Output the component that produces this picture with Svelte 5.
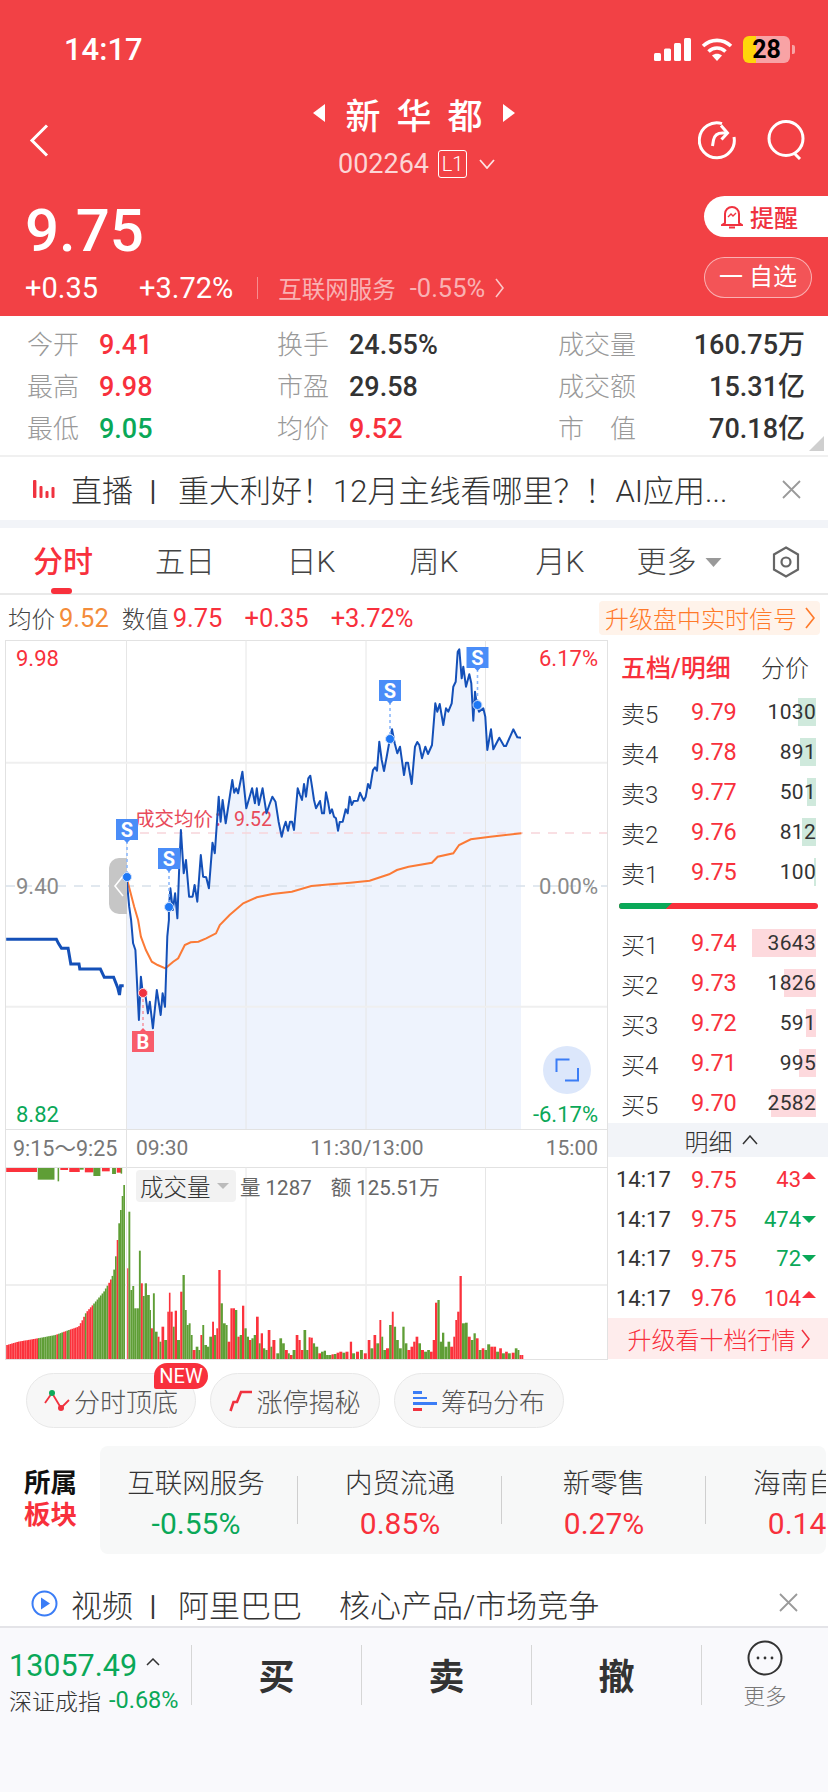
<script>
  // chart points were read from crops of the chart, so they come in crop units
  const a = ([x, y]) => [x / 2.57, y / 3];
  const b = ([x, y]) => [x / 2.57, 280 + y / 3];
  const c = ([x, y]) => [280 + x / 3, y / 3];
  const toPath = (pts) => pts.map(([x, y], i) => `${i ? 'L' : 'M'}${x.toFixed(1)} ${y.toFixed(1)}`).join('');

  const priceLine = [
    ...[[325,712],[332,800]].map(a),
    ...[[337,0],[342,70],[348,90],[357,300],[362,170],[367,220],[372,210],[380,280],[385,245],[393,325],[403,210],[413,285],[418,220],[424,260],[430,50],[434,0]].map(b),
    ...[[434,800],[438,745],[444,810],[450,760],[456,835],[460,700],[465,570],[472,700],[478,660],[486,770],[495,770],[500,735],[507,785],[516,645],[522,710],[530,712],[537,745],[546,608],[552,640],[562,470],[567,545],[572,480],[580,550],[597,420],[602,458],[607,445],[612,460],[623,395],[633,505],[648,445],[655,490],[660,445],[665,495],[675,445],[685,520],[692,495],[700,470],[708,485],[716,545]].map(a),
    ...[[5,590],[12,560],[17,545],[24,572],[30,545],[36,545],[42,570],[53,445],[60,465],[66,480],[72,432],[78,470],[85,415],[91,407],[97,445],[102,480],[108,505],[120,483],[126,520],[132,520],[138,457],[145,490],[150,520],[156,508],[162,530],[168,535],[174,572],[179,546],[188,545],[197,508],[203,520],[209,470],[215,495],[221,483],[233,482],[240,458],[251,482],[257,470],[264,432],[270,445],[279,390],[285,382],[291,392],[298,305],[305,360],[312,393],[320,350],[330,295],[336,268],[344,310],[352,340],[360,320],[372,405],[378,368],[384,368],[395,432],[405,320],[412,306],[418,315],[426,355],[436,320],[444,342],[456,315],[466,190],[472,215],[479,192],[490,255],[498,205],[505,215],[515,190],[520,140],[527,125],[533,35],[538,28],[545,115],[550,80],[558,140],[568,103],[574,130],[580,242],[585,155],[590,190],[597,215],[610,205],[616,230],[622,330],[633,268],[640,328],[658,293],[672,318],[678,318],[700,268],[712,292],[723,293]].map(c)
  ];
  const premarket = [[16,58],[145,58],[150,70],[158,85],[175,85],[182,132],[203,132],[205,147],[258,147],[268,172],[292,172],[303,205],[307,225],[310,197],[318,197]].map(b);
  const avgLine = [
    ...[[325,712],[345,800],[355,840]].map(a),
    ...[[362,50],[375,90],[390,125],[405,135],[425,145],[445,125],[458,115],[475,75],[490,67],[510,65],[530,55],[555,40],[565,15]].map(b),
    ...[[590,825],[605,810],[625,790],[660,772],[700,762],[750,755],[800,738],[850,733],[900,728],[950,722],[1000,703],[1020,690],[1050,680],[1110,668],[1125,650],[1165,640],[1180,615],[1210,598],[1260,590],[1340,580]].map(a)
  ];
  const last = priceLine[priceLine.length - 1];
  const areaPath = `${toPath(priceLine)}L${last[0].toFixed(1)} 489L126.5 489Z`;

  const vx = [126.5, 246, 366, 485.5];
  const badges = [
    { x: 127, top: 179, dot: 237, t: 'S' },
    { x: 169, top: 208, dot: 267, t: 'S' },
    { x: 390, top: 40, dot: 99, t: 'S' },
    { x: 477.5, top: 7, dot: 65, t: 'S' }
  ];

  // pre-market volume envelope, then one entry per session bar
  const env = [[16,555],[45,545],[95,535],[140,525],[175,510],[200,500],[210,480],[218,460],[225,450],[240,430],[265,395],[280,365],[290,340],[297,275],[303,200],[310,135],[316,75]];
  const reds = [[16,95],[143,148],[160,167],[178,216],[222,238],[278,284],[297,302]];
  const topAt = (x) => {
    for (let i = 1; i < env.length; i++) {
      if (x <= env[i][0]) {
        const [x0, y0] = env[i - 1], [x1, y1] = env[i];
        return y0 + (y1 - y0) * (x - x0) / (x1 - x0);
      }
    }
    return 75;
  };
  const preBars = [];
  for (let x = 16; x < 318; x += 4.3) {
    preBars.push({ x: x / 2.57, w: 1.7, top: topAt(x) / 3 - 7, red: reds.some(([l, r]) => x >= l && x <= r) });
  }
  const session = 'r327,325 g330,155 g335,390 g340,378 g345,445 g351,445 g357,272 r362,370 g367,408 g372,370 g378,405 g385,450 r388,505 g393,400 g398,515 r405,530 g410,545 r415,500 g422,540 r430,455 r434,398 r438,455 g444,500 r449,452 g455,540 r463,395 g469,345 g475,450 g480,495 g485,490 g490,525 r495,570 g503,560 g510,570 r515,525 g520,495 g525,555 g532,560 g538,530 r545,485 g550,525 r556,505 r561,330 g567,430 g573,490 g580,495 r585,545 r592,445 r598,445 g604,450 r610,530 g616,525 r622,437 g628,505 g634,530 r640,540 g646,535 g652,525 r658,470 g665,550 r670,520 g676,565 g682,570 r688,510 g695,560 r700,540 g710,580 g718,535 g725,550 r732,570 g740,580 r745,585 g752,570 r760,525 r767,540 r773,570 g780,510 g787,570 r793,532 r798,533 g804,550 g810,560 r818,580 g825,575 g832,572 g838,585 g845,585 r852,583 g858,582 r865,578 r872,575 g880,578 r888,575 r899,545 g905,580 r915,575 g925,570 r935,580 r945,540 g952,565 r960,525 g967,550 r975,480 g980,530 g985,570 r992,565 g1000,495 r1007,455 g1012,500 g1018,540 g1025,565 g1034,500 g1040,550 r1047,570 r1055,560 r1062,545 r1068,530 g1075,550 r1082,570 g1090,575 g1098,570 r1105,575 r1112,540 r1118,428 g1124,420 g1130,545 g1136,518 g1142,560 g1150,545 r1157,560 r1165,530 r1170,480 r1175,455 r1181,348 g1187,490 g1195,488 r1202,530 g1210,540 g1217,520 r1223,535 g1230,570 r1238,565 g1245,570 g1252,553 r1260,560 r1268,560 g1275,575 r1283,565 g1290,580 r1298,575 g1305,580 r1315,578 g1323,565 g1330,570 r1335,585 r1340,585'.split(' ').map((s) => {
    const [x, top] = s.slice(1).split(',').map(Number);
    return { x, top, red: s[0] === 'r' };
  });
  const sessionBars = session.map((s, i) => {
    const next = session[i + 1] ? session[i + 1].x : s.x + 5;
    return { x: s.x / 2.57, w: Math.min((next - s.x) / 2.57, 3), top: s.top / 3 - 7, red: s.red };
  });
  const volBars = [...preBars, ...sessionBars];

  const stripes = [[16,95,12,'r'],[97,140,35,'g'],[148,152,40,'g'],[155,175,6,'r'],[178,205,12,'r'],[205,215,5,'g'],[218,240,13,'r'],[240,258,24,'g'],[262,282,10,'r'],[288,298,18,'g'],[300,312,14,'r'],[310,314,17,'g']];

  const stats = [
    [{ l: '今开', v: '9.41', c: 'up' }, { l: '换手', v: '24.55%' }, { l: '成交量', v: '160.75万' }],
    [{ l: '最高', v: '9.98', c: 'up' }, { l: '市盈', v: '29.58' }, { l: '成交额', v: '15.31亿' }],
    [{ l: '最低', v: '9.05', c: 'down' }, { l: '均价', v: '9.52', c: 'up' }, { l: '市　值', v: '70.18亿' }]
  ];
  const tabs = [
    { t: '分时', x: 63 }, { t: '五日', x: 185 }, { t: '日K', x: 311 }, { t: '周K', x: 434 }, { t: '月K', x: 560 }
  ];
  const asks = [
    ['卖5', '9.79', '1030', 18], ['卖4', '9.78', '891', 16], ['卖3', '9.77', '501', 9], ['卖2', '9.76', '812', 14], ['卖1', '9.75', '100', 2]
  ];
  const bids = [
    ['买1', '9.74', '3643', 64], ['买2', '9.73', '1826', 32], ['买3', '9.72', '591', 10], ['买4', '9.71', '995', 17], ['买5', '9.70', '2582', 45]
  ];
  const ticks = [
    ['9.75', '43', true], ['9.75', '474', false], ['9.75', '72', false], ['9.76', '104', true]
  ];
  const sectors = [
    ['互联网服务', '-0.55%', 'down'], ['内贸流通', '0.85%', 'up'], ['新零售', '0.27%', 'up'], ['海南自贸', '0.14%', 'up']
  ];
</script>

<div class="page">
  <header class="top">
    <div class="status">
      <span class="clock">14:17</span>
      <div class="status-icons">
        <svg width="37" height="23" viewBox="0 0 37 23" fill="#fff">
          <rect x="0" y="15" width="7" height="8" rx="1.5" /><rect x="10" y="10.5" width="7" height="12.5" rx="1.5" /><rect x="20" y="5" width="7" height="18" rx="1.5" /><rect x="30" y="0" width="7" height="23" rx="1.5" />
        </svg>
        <svg class="wifi" width="32" height="24" viewBox="0 0 32 24" fill="none" stroke="#fff" stroke-width="3.6">
          <path d="M2 9C10 1.5 22 1.5 30 9" /><path d="M7.5 14.5C12.5 9.8 19.5 9.8 24.5 14.5" /><path d="M16 24l-5-5.4c3-2.4 7-2.4 10 0z" fill="#fff" stroke="none" />
        </svg>
        <div class="battery"><span>28</span></div>
        <i class="battery-tip"></i>
      </div>
    </div>

    <div class="nav">
      <svg class="back" width="20" height="33" viewBox="0 0 20 33" fill="none" stroke="#fff" stroke-width="3"><path d="M18 1.5L3 16.5l15 15" /></svg>
      <div class="title">
        <div class="name"><i class="tri left"></i><span>新华都</span><i class="tri right"></i></div>
        <div class="code">
          <span>002264</span><b>L1</b>
          <svg width="16" height="10" viewBox="0 0 16 10" fill="none" stroke="#fff" stroke-opacity=".85" stroke-width="1.8"><path d="M1 1l7 8 7-8" /></svg>
        </div>
      </div>
      <div class="nav-icons">
        <svg width="38" height="40" viewBox="0 0 38 40" fill="none" stroke="#fff" stroke-width="3"><path d="M24 3.600A17.500 17.500 0 1 0 36 17" /><path d="M14.500 26l1-6c.8-4 4-7 9-7h4" /><path d="M23 5.500l6.500 7.500-6 6.500" /></svg>
        <svg width="38" height="40" viewBox="0 0 38 40" fill="none" stroke="#fff" stroke-width="3"><circle cx="19" cy="18.500" r="17" /><path d="M27 33l6 6" /></svg>
      </div>
    </div>

    <div class="quote">
      <div>
        <div class="last">9.75</div>
        <div class="change">
          <span class="chg">+0.35</span>
          <span class="pct">+3.72%</span>
          <i class="bar"></i>
          <span class="sector">互联网服务</span>
          <span class="sector-pct">-0.55%</span>
          <svg width="10" height="20" viewBox="0 0 10 20" fill="none" stroke="#fff" stroke-opacity=".7" stroke-width="1.6"><path d="M1 1l7 9-7 9" /></svg>
        </div>
      </div>
      <div class="pills">
        <div class="remind">
          <svg width="22" height="26" viewBox="0 0 22 26" fill="none" stroke="#f0323f" stroke-width="2"><path d="M4 19V10a7 7 0 0 1 14 0v9l3 2H1z" /><path d="M8 23.500h6" /><path d="M7 13l3-3 2 2 3-3" stroke-width="1.400" /></svg>
          <span>提醒</span>
        </div>
        <div class="watch">一 自选</div>
      </div>
    </div>
  </header>

  <section class="stats">
    {#each stats as row}
      <div class="stat-row">
        {#each row as s, i}
          <div class="stat stat-{i}">
            <span class="stat-label">{s.l}</span>
            <span class="stat-value {s.c ?? ''}">{s.v}</span>
          </div>
        {/each}
      </div>
    {/each}
    <i class="corner"></i>
  </section>

  <div class="notice live">
    <svg width="22" height="18" viewBox="0 0 22 18" fill="#f0323f"><rect x="0" y="0" width="3.400" height="18" rx="1" /><rect x="6.500" y="6" width="3" height="12" rx="1" /><rect x="12.500" y="11" width="3" height="7" rx="1" /><rect x="18.500" y="7" width="3" height="11" rx="1" /></svg>
    <span class="notice-text">直播<em>丨</em>重大利好！12月主线看哪里？！AI应用...</span>
    <svg class="close" width="19" height="19" viewBox="0 0 19 19" stroke="#9a9a9a" stroke-width="1.800"><path d="M1 1l17 17M18 1L1 18" /></svg>
  </div>
  <div class="gap"></div>

  <nav class="tabs">
    {#each tabs as t, i}
      <span class="tab" class:on={i === 0} style="left:{t.x}px">{t.t}</span>
    {/each}
    <span class="tab more">更多<i></i></span>
    <svg class="hex" width="28" height="32" viewBox="0 0 28 32" fill="none" stroke="#666" stroke-width="2.200"><path d="M14 1.500l12 7v15l-12 7-12-7v-15z" /><circle cx="14" cy="16" r="4.500" /></svg>
    <i class="indicator"></i>
  </nav>

  <div class="legend">
    <span class="k">均价</span><span class="avg">9.52</span>
    <span class="k second">数值</span><span class="up">9.75</span>
    <span class="up far">+0.35</span>
    <span class="up far">+3.72%</span>
    <span class="upgrade-signal">升级盘中实时信号<svg width="10" height="22" viewBox="0 0 10 22" fill="none" stroke="#ff7a2a" stroke-width="1.700"><path d="M1 1l8 10-8 10" /></svg></span>
  </div>

  <div class="market">
    <div class="charts">
      <svg class="main-chart" width="608" height="490" viewBox="0 0 608 490">
        <rect x="5.500" y="0.500" width="602" height="489" fill="#fff" stroke="#e2e2e2" />
        <path d={areaPath} fill="#eef3fd" />
        {#each vx as x}
          <line x1={x} x2={x} y1="0" y2="489" stroke="#e6e6e6" />
        {/each}
        <line x1="6" x2="607" y1="122.700" y2="122.700" stroke="#efefef" stroke-width="2" />
        <line x1="6" x2="607" y1="366.700" y2="366.700" stroke="#efefef" stroke-width="2" />
        <line x1="6" x2="607" y1="246" y2="246" stroke="#d8e1ea" stroke-width="1.600" stroke-dasharray="9 8" />
        <line x1="140" x2="607" y1="193" y2="193" stroke="#f8d5da" stroke-width="1.600" stroke-dasharray="9 8" />

        <text class="axis-text up" x="16" y="26">9.98</text>
        <text class="axis-text up" x="598" y="26" text-anchor="end">6.17%</text>
        <text class="axis-text grey" x="16" y="254">9.40</text>
        <text class="axis-text grey" x="598" y="254" text-anchor="end">0.00%</text>
        <text class="axis-text down" x="16" y="482">8.82</text>
        <text class="axis-text down" x="598" y="482" text-anchor="end">-6.17%</text>
        <text class="avg-note" x="135" y="186">成交均价：<tspan x="234">9.52</tspan></text>

        <path d={toPath(avgLine)} fill="none" stroke="#fb7a36" stroke-width="2" />
        <path d={toPath(priceLine)} fill="none" stroke="#1450b8" stroke-width="2" stroke-linejoin="round" />
        <path d={toPath(premarket)} fill="none" stroke="#1450b8" stroke-width="3" />

        <path d="M127 218h-8a10 10 0 0 0-10 10v36a10 10 0 0 0 10 10h8z" fill="#c6c6c6" />
        <path d="M123 236l-8 10 8 10" fill="none" stroke="#fff" stroke-width="1.600" />

        {#each badges as m}
          <line x1={m.x} x2={m.x} y1={m.top + 22} y2={m.dot} stroke="#8db8fb" stroke-width="1.600" stroke-dasharray="3 3" />
          <path d="M{m.x - 11} {m.top}h22v21h-8l-3 3-3-3h-8z" fill="#4a8df8" />
          <text class="marker" x={m.x} y={m.top + 18} text-anchor="middle">{m.t}</text>
          <circle cx={m.x} cy={m.dot} r="4.500" fill="#1e78f5" stroke="#cfe0fc" stroke-width="1" />
        {/each}

        <line x1="143" x2="143" y1="353" y2="389" stroke="#f59aa6" stroke-width="1.600" stroke-dasharray="3 3" />
        <path d="M132 391h8l3-3 3 3h8v21h-22z" fill="#f85c6b" />
        <text class="marker" x="143" y="409" text-anchor="middle">B</text>
        <circle cx="143" cy="353" r="4.500" fill="#f0323f" stroke="#fcd5da" stroke-width="1" />

        <ellipse cx="567" cy="430" rx="24" ry="24" fill="#dce7fb" />
        <path d="M556.500 432v-12.500h13M578 428v12.500h-13" fill="none" stroke="#3b7df6" stroke-width="2" />
      </svg>

      <div class="axis">
        <span class="premarket">9:15～9:25</span>
        <div class="axis-times"><span>09:30</span><span>11:30/13:00</span><span>15:00</span></div>
      </div>

      <div class="volume">
        <svg width="608" height="193" viewBox="0 0 608 193">
          <rect x="5.500" y="0.500" width="602" height="192" fill="#fff" stroke="#e2e2e2" />
          {#each vx as x}
            <line x1={x} x2={x} y1="0" y2="192" stroke="#e6e6e6" />
          {/each}
          <line x1="6" x2="607" y1="118" y2="118" stroke="#efefef" stroke-width="2" />
          {#each stripes as [l, r, h, col]}
            <rect x={l / 2.57} y="1" width={(r - l) / 2.57} height={h / 3} fill={col === 'r' ? '#fb323c' : '#5f9e36'} />
          {/each}
          {#each volBars as v}
            <rect x={v.x.toFixed(1)} y={v.top.toFixed(1)} width={v.w.toFixed(1)} height={(192 - v.top).toFixed(1)} fill={v.red ? '#fb323c' : '#5f9e36'} />
          {/each}
        </svg>
        <div class="vol-head">
          <span class="vol-tag">成交量<i></i></span>
          <span class="vol-item">量 1287</span>
          <span class="vol-item">额 125.51万</span>
        </div>
      </div>
    </div>

    <aside class="book">
      <div class="book-head"><span class="up">五档/明细</span><span>分价</span></div>
      {#each asks as [l, p, q, w]}
        <div class="level">
          <i class="depth sell" style="width:{w}px"></i>
          <span>{l}</span><span class="price up">{p}</span><span class="qty">{q}</span>
        </div>
      {/each}
      <div class="ratio"><i></i></div>
      {#each bids as [l, p, q, w]}
        <div class="level">
          <i class="depth buy" style="width:{w}px"></i>
          <span>{l}</span><span class="price up">{p}</span><span class="qty">{q}</span>
        </div>
      {/each}
      <div class="detail-head">明细
        <svg width="16" height="10" viewBox="0 0 16 10" fill="none" stroke="#333" stroke-width="1.500"><path d="M1 9l7-8 7 8" /></svg>
      </div>
      <div class="tick-list">
        {#each ticks as [p, q, up]}
          <div class="tick">
            <span>14:17</span><span class="price up">{p}</span>
            <span class="tick-qty {up ? 'up' : 'down'}">{q}<i class:fall={!up}></i></span>
          </div>
        {/each}
      </div>
      <div class="upgrade">升级看十档行情<svg width="10" height="20" viewBox="0 0 10 20" fill="none" stroke="#f0323f" stroke-width="1.500"><path d="M1 1l7 9-7 9" /></svg></div>
    </aside>
  </div>

  <div class="chips">
    <div class="chip">
      <svg width="26" height="22" viewBox="0 0 26 22" fill="none" stroke="#f0323f" stroke-width="1.800"><path d="M1 13L8 3l9 15 8-8" /><circle cx="8" cy="3" r="3" fill="#0eaa5a" stroke="none" /><circle cx="17" cy="18" r="3" fill="#f0323f" stroke="none" /></svg>
      <span>分时顶底</span>
      <b class="new">NEW</b>
    </div>
    <div class="chip">
      <svg width="23" height="22" viewBox="0 0 23 22" fill="none" stroke="#f0323f" stroke-width="2.600"><path d="M1.500 21l3-9h3.500l4-10h11" /></svg>
      <span>涨停揭秘</span>
    </div>
    <div class="chip">
      <svg width="24" height="22" viewBox="0 0 24 22"><rect x="0" y="1" width="9" height="3" fill="#3b7df6" /><rect x="0" y="7" width="14" height="2" fill="#3b7df6" /><rect x="0" y="12" width="24" height="3" fill="#3b7df6" /><rect x="0" y="18" width="9" height="3" fill="#f0323f" /></svg>
      <span>筹码分布</span>
    </div>
  </div>

  <section class="belong">
    <div class="belong-title">所属<span>板块</span></div>
    <div class="belong-card">
      {#each sectors as [n, v, c]}
        <div class="belong-item">
          <span class="belong-name">{n}</span>
          <span class="belong-value {c}">{v}</span>
        </div>
      {/each}
    </div>
  </section>

  <div class="notice video">
    <svg width="27" height="27" viewBox="0 0 27 27" fill="none"><circle cx="13.500" cy="13.500" r="12" stroke="#3b7df6" stroke-width="2" /><path d="M10 7.500l9 6-9 6z" fill="#3b7df6" /></svg>
    <span class="notice-text">视频<em>丨</em>阿里巴巴<b class="spacer"></b>核心产品/市场竞争</span>
    <svg class="close" width="19" height="19" viewBox="0 0 19 19" stroke="#9a9a9a" stroke-width="1.800"><path d="M1 1l17 17M18 1L1 18" /></svg>
  </div>

  <footer class="foot">
    <div class="index">
      <div class="index-value"><span>13057.49</span>
        <svg width="14" height="8" viewBox="0 0 14 8" fill="none" stroke="#333" stroke-width="1.500"><path d="M1 7l6-6 6 6" /></svg>
      </div>
      <div class="index-sub"><span>深证成指</span><span class="down">-0.68%</span></div>
    </div>
    <div class="action">买</div>
    <div class="action">卖</div>
    <div class="action">撤</div>
    <div class="action more-btn">
      <svg width="36" height="36" viewBox="0 0 36 36" fill="none" stroke="#333" stroke-width="2"><circle cx="18" cy="18" r="16.500" /><circle cx="11" cy="18" r="1.400" fill="#333" stroke="none" /><circle cx="18" cy="18" r="1.400" fill="#333" stroke="none" /><circle cx="25" cy="18" r="1.400" fill="#333" stroke="none" /></svg>
      <span>更多</span>
    </div>
  </footer>
</div>

<style>
  :global(body) {
    margin: 0;
    background: #fff;
  }
  .page {
    width: 828px;
    height: 1792px;
    overflow: hidden;
    position: relative;
    background: #fff;
    color: #333;
    font-family: Roboto, "Noto Sans CJK SC", sans-serif;
  }
  .up { color: #f8303c; fill: #f8303c; }
  .down { color: #0aa858; fill: #0aa858; }
  .grey { fill: #8a8a8a; }

  .top {
    height: 316px;
    background: #f24145;
    color: #fff;
  }
  .status {
    height: 98px;
    display: flex;
    align-items: center;
    justify-content: space-between;
    padding: 0 33px 0 64px;
    box-sizing: border-box;
  }
  .clock {
    font-size: 31px;
    font-weight: 500;
  }
  .status-icons {
    display: flex;
    align-items: center;
  }
  .wifi { margin-left: 10px; }
  .battery {
    width: 47px;
    height: 27px;
    margin-left: 10px;
    border-radius: 6px;
    background: linear-gradient(to right, #ffd60a 27%, #f8a3a5 27%);
    display: flex;
    align-items: center;
    justify-content: center;
    color: #000;
    font-size: 25px;
    font-weight: 700;
  }
  .battery-tip {
    width: 3px;
    height: 9px;
    margin-left: 2px;
    border-radius: 0 2px 2px 0;
    background: #f8a3a5;
  }

  .nav {
    height: 82px;
    display: flex;
    align-items: center;
    justify-content: space-between;
    padding: 0 23px 0 29px;
    position: relative;
  }
  .back { margin-top: 2px; }
  .title {
    position: absolute;
    left: 0;
    right: 0;
    top: -3px;
    display: flex;
    flex-direction: column;
    align-items: center;
  }
  .name {
    display: flex;
    align-items: center;
    height: 36px;
    font-size: 35px;
    font-weight: 500;
    letter-spacing: 16px;
  }
  .name span { margin: 0 4px 0 20px; }
  .tri {
    width: 0;
    height: 0;
    border-top: 9px solid transparent;
    border-bottom: 9px solid transparent;
  }
  .tri.left { border-right: 12px solid #fff; }
  .tri.right { border-left: 12px solid #fff; }
  .code {
    display: flex;
    align-items: center;
    height: 30px;
    margin: 18px 0 0 5px;
    font-size: 27px;
    color: rgba(255, 255, 255, 0.78);
  }
  .code b {
    width: 29px;
    height: 28px;
    margin-left: 9px;
    border: 1px solid #fff;
    border-radius: 3px;
    box-sizing: border-box;
    font-size: 20px;
    font-weight: 300;
    line-height: 26px;
    text-align: center;
    color: #fff;
  }
  .code svg { margin: 0 0 0 12px; }
  .nav-icons {
    display: flex;
    gap: 31px;
    margin-top: 2px;
  }

  .quote {
    height: 136px;
    display: flex;
    justify-content: space-between;
    padding-left: 25px;
    box-sizing: border-box;
  }
  .last {
    height: 72px;
    margin-top: 15px;
    font-size: 60px;
    font-weight: 500;
    line-height: 72px;
  }
  .change {
    display: flex;
    align-items: center;
    height: 36px;
    margin-top: 3px;
    font-size: 29px;
  }
  .pct { margin-left: 41px; }
  .bar {
    width: 1px;
    height: 22px;
    margin: 0 20px 0 24px;
    background: rgba(255, 255, 255, 0.4);
  }
  .sector {
    font-size: 23.500px;
    color: rgba(255, 255, 255, 0.6);
  }
  .sector-pct {
    margin: 0 10px 0 14px;
    font-size: 25.500px;
    color: rgba(255, 255, 255, 0.6);
  }
  .pills {
    width: 124px;
    padding-top: 16px;
  }
  .remind {
    height: 41px;
    background: #fff;
    border-radius: 21px 0 0 21px;
    display: flex;
    align-items: center;
    padding-left: 17px;
    gap: 7px;
    color: #f0323f;
    font-size: 24px;
    font-weight: 500;
  }
  .watch {
    width: 108px;
    height: 41px;
    box-sizing: border-box;
    margin-top: 20px;
    border: 1px solid rgba(255, 255, 255, 0.55);
    border-radius: 21px;
    background: rgba(255, 255, 255, 0.1);
    text-align: center;
    line-height: 38px;
    font-size: 24px;
  }

  .stats {
    height: 141px;
    padding: 8px 0 0;
    box-sizing: border-box;
    border-bottom: 2px solid #f0f0f0;
    position: relative;
  }
  .stat-row {
    height: 42px;
    position: relative;
  }
  .stat {
    position: absolute;
    top: 0;
    display: flex;
    align-items: center;
    height: 100%;
    font-size: 26px;
    line-height: 1;
  }
  .stat-0 { left: 27px; }
  .stat-1 { left: 277px; }
  .stat-2 { left: 558px; right: 23px; justify-content: space-between; }
  .stat-label { color: #999; font-weight: 300; }
  .stat-value {
    margin-left: 20px;
    font-size: 27px;
    font-weight: 500;
  }
  .corner {
    position: absolute;
    right: 4px;
    bottom: 4px;
    width: 0;
    height: 0;
    border-left: 15px solid transparent;
    border-bottom: 15px solid #cfcfcf;
  }

  .notice {
    display: flex;
    align-items: center;
    position: relative;
    padding-left: 33px;
    box-sizing: border-box;
  }
  .notice-text {
    margin-left: 16px;
    font-size: 31px;
    font-weight: 300;
    color: #333;
    white-space: nowrap;
  }
  .notice-text em {
    font-style: normal;
    font-weight: 400;
    margin: 0 12px 0 7px;
    font-size: 26px;
  }
  .close {
    position: absolute;
    right: 27px;
    top: 50%;
    margin-top: -9px;
  }
  .live { height: 63px; }
  .gap {
    height: 8px;
    background: #f2f4f8;
  }

  .tabs {
    height: 67px;
    position: relative;
    border-bottom: 2px solid #e9e9e9;
    box-sizing: border-box;
    font-weight: 300;
  }
  .tab {
    position: absolute;
    top: 14px;
    transform: translateX(-50%);
    font-size: 30px;
    line-height: 40px;
    color: #444;
    white-space: nowrap;
  }
  .tab.on {
    color: #f8303c;
    font-weight: 500;
  }
  .tab.more {
    left: 679px;
    display: flex;
    align-items: center;
    gap: 9px;
  }
  .tab.more i {
    width: 0;
    height: 0;
    border-left: 8px solid transparent;
    border-right: 8px solid transparent;
    border-top: 9px solid #999;
  }
  .hex {
    position: absolute;
    left: 772px;
    top: 18px;
  }
  .indicator {
    position: absolute;
    left: 51px;
    top: 60px;
    width: 21px;
    height: 6px;
    border-radius: 3px;
    background: #f8303c;
  }

  .legend {
    height: 45px;
    padding: 0 8px;
    display: flex;
    align-items: center;
    font-size: 25.500px;
    box-sizing: border-box;
  }
  .legend .k { font-size: 23.500px; font-weight: 300; color: #444; margin-right: 4px; }
  .legend .second { margin-left: 13px; }
  .avg { color: #f48c3a; }
  .far { margin-left: 22px; }
  .upgrade-signal {
    margin-left: auto;
    height: 34px;
    width: 221px;
    box-sizing: border-box;
    padding: 0 5px 0 6px;
    display: flex;
    align-items: center;
    justify-content: space-between;
    background: #fff3ea;
    border-radius: 4px;
    color: #ff7a2a;
    font-size: 24px;
    font-weight: 300;
  }

  .market {
    display: flex;
    height: 720px;
  }
  .charts {
    width: 608px;
    flex: none;
  }
  .main-chart, .volume svg { display: block; }
  .axis-text {
    font-size: 22px;
    font-family: Roboto, sans-serif;
  }
  .avg-note {
    font-size: 19.500px;
    fill: #e84a5a;
  }
  .marker {
    font-size: 20px;
    font-weight: 700;
    fill: #fff;
    font-family: Roboto, sans-serif;
  }
  .axis {
    height: 37px;
    margin-left: 5px;
    display: flex;
    box-sizing: border-box;
    border-left: 1px solid #e2e2e2;
    border-right: 1px solid #e2e2e2;
    font-size: 21px;
    color: #777;
    line-height: 37px;
  }
  .premarket {
    width: 121px;
    box-sizing: border-box;
    border-right: 1px solid #e2e2e2;
    padding-left: 7px;
    white-space: nowrap;
    font-size: 21.500px;
  }
  .axis-times {
    flex: 1;
    display: flex;
    justify-content: space-between;
    padding: 0 9px 0 9px;
  }
  .volume {
    position: relative;
    height: 193px;
  }
  .vol-head {
    position: absolute;
    left: 136px;
    top: 3px;
    display: flex;
    align-items: center;
    height: 32px;
    font-size: 20.500px;
    color: #666;
  }
  .vol-tag {
    width: 100px;
    height: 32px;
    padding-left: 4px;
    box-sizing: border-box;
    display: flex;
    align-items: center;
    gap: 4px;
    background: #f2f2f2;
    border-radius: 4px;
    font-size: 23.500px;
    font-weight: 300;
    color: #333;
  }
  .vol-tag i {
    width: 0;
    height: 0;
    margin-left: 2px;
    border-left: 6px solid transparent;
    border-right: 6px solid transparent;
    border-top: 6px solid #bbb;
  }
  .vol-item { margin-left: 4px; margin-right: 15px; white-space: nowrap; }

  .book {
    width: 220px;
    flex: none;
    font-size: 24px;
  }
  .book-head {
    height: 52px;
    padding: 0 19px 0 13px;
    display: flex;
    align-items: center;
    justify-content: space-between;
    font-weight: 300;
    box-sizing: border-box;
  }
  .book-head span:first-child {
    font-size: 25px;
    font-weight: 500;
  }
  .level {
    position: relative;
    height: 40px;
    display: flex;
    align-items: center;
    padding-left: 13px;
    font-weight: 300;
  }
  .price {
    position: absolute;
    left: 83px;
    font-weight: 400;
    font-size: 23.500px;
  }
  .qty {
    position: absolute;
    right: 12px;
    font-size: 21px;
    font-weight: 400;
    letter-spacing: 0.3px;
  }
  .depth {
    position: absolute;
    right: 12px;
    top: 6px;
    height: 28px;
  }
  .depth.sell { background: #cfe9dc; }
  .depth.buy { background: #fdd9dd; }
  .ratio {
    height: 6px;
    margin: 11px 10px 14px 11px;
    border-radius: 3px;
    background: #f8303c;
    overflow: hidden;
  }
  .ratio i {
    display: block;
    width: 53px;
    height: 6px;
    background: #0aa858;
    clip-path: polygon(0 0, 100% 0, 88% 100%, 0 100%);
  }
  .detail-head {
    height: 34px;
    padding-left: 6px;
    background: #f2f4f8;
    display: flex;
    align-items: center;
    justify-content: center;
    gap: 9px;
    font-size: 24px;
    font-weight: 300;
  }
  .tick-list {
    height: 161px;
    padding-top: 3px;
    box-sizing: border-box;
  }
  .tick {
    position: relative;
    height: 39.500px;
    display: flex;
    align-items: center;
    padding-left: 8px;
    font-size: 22px;
  }
  .tick-qty {
    position: absolute;
    right: 27px;
    font-size: 22px;
  }
  .tick-qty i {
    position: absolute;
    left: 100%;
    margin-left: 1px;
    top: 5px;
    width: 0;
    height: 0;
    border-left: 7px solid transparent;
    border-right: 7px solid transparent;
    border-bottom: 7px solid #f8303c;
  }
  .tick-qty i.fall {
    top: 9px;
    border-bottom: 0;
    border-top: 7px solid #0aa858;
  }
  .upgrade {
    height: 41px;
    background: #feecec;
    display: flex;
    align-items: center;
    justify-content: center;
    gap: 5px;
    padding-left: 2px;
    color: #f8303c;
    font-size: 24px;
    font-weight: 300;
  }

  .chips {
    height: 70px;
    padding: 13px 0 0 26px;
    display: flex;
    gap: 14px;
    box-sizing: border-box;
  }
  .chip {
    position: relative;
    width: 170px;
    height: 55px;
    box-sizing: border-box;
    border: 1px solid #e8e8e8;
    border-radius: 28px;
    background: #f7f7f7;
    display: flex;
    align-items: center;
    justify-content: center;
    gap: 4px;
    font-size: 26px;
    font-weight: 300;
    color: #555;
  }
  .new {
    position: absolute;
    left: 127px;
    top: -11px;
    width: 54px;
    height: 26px;
    border-radius: 13px 13px 13px 2px;
    background: #f8303c;
    color: #fff;
    font-size: 20px;
    font-weight: 400;
    line-height: 26px;
    text-align: center;
  }

  .belong {
    height: 125px;
    padding: 16px 0 0 24px;
    display: flex;
    box-sizing: border-box;
  }
  .belong-title {
    width: 76px;
    flex: none;
    padding-top: 21px;
    font-size: 26.500px;
    font-weight: 700;
    line-height: 32px;
    color: #111;
  }
  .belong-title span {
    display: block;
    color: #f8303c;
  }
  .belong-card {
    width: 726px;
    height: 108px;
    flex: none;
    border-radius: 8px;
    background: #f7f8f8;
    display: flex;
    overflow: hidden;
  }
  .belong-item {
    width: 204px;
    flex: none;
    display: flex;
    flex-direction: column;
    align-items: center;
    padding-top: 18px;
    box-sizing: border-box;
    position: relative;
    white-space: nowrap;
    font-size: 27.500px;
    font-weight: 300;
  }
  .belong-item:first-child {
    width: 198px;
    padding-right: 6px;
  }
  .belong-item:not(:last-child)::after {
    content: "";
    position: absolute;
    right: 0;
    top: 30px;
    height: 48px;
    width: 1px;
    background: #cfcfcf;
  }
  .belong-name { line-height: 40px; }
  .belong-value {
    font-size: 30px;
    font-weight: 400;
    line-height: 40px;
  }

  .video {
    height: 71px;
    padding: 26px 0 0 31px;
    background: #fff;
  }
  .video .notice-text { margin-left: 13px; }
  .video .close {
    right: 30px;
    margin-top: 2px;
  }
  .spacer { display: inline-block; width: 37px; }

  .foot {
    height: 166px;
    border-top: 2px solid #e4e4e8;
    box-sizing: border-box;
    background: #f9f9fc;
    display: flex;
    padding-top: 17px;
    align-items: flex-start;
  }
  .index {
    width: 191px;
    height: 60px;
    box-sizing: border-box;
    padding-left: 9px;
    flex: none;
  }
  .index-value {
    display: flex;
    align-items: center;
    height: 40px;
    font-size: 30.500px;
    color: #0aa858;
  }
  .index-value svg { margin: -6px 0 0 9px; }
  .index-sub {
    display: flex;
    align-items: center;
    gap: 8px;
    height: 30px;
    font-size: 23px;
    font-weight: 300;
    white-space: nowrap;
  }
  .index-sub .down { font-weight: 400; font-size: 23.500px; }
  .action {
    width: 170px;
    height: 60px;
    flex: none;
    border-left: 1px solid #d6d6d6;
    box-sizing: border-box;
    display: flex;
    align-items: center;
    justify-content: center;
    padding-top: 6px;
    font-size: 36px;
    font-weight: 700;
    color: #333;
    line-height: 1;
  }
  .more-btn {
    width: 127px;
    padding-top: 0;
    flex-direction: column;
    justify-content: flex-start;
    gap: 10px;
    font-size: 21.500px;
    font-weight: 300;
    color: #777;
    overflow: visible;
  }
  .more-btn svg { margin-top: -5px; flex: none; }
  .more-btn span { white-space: nowrap; }
</style>
